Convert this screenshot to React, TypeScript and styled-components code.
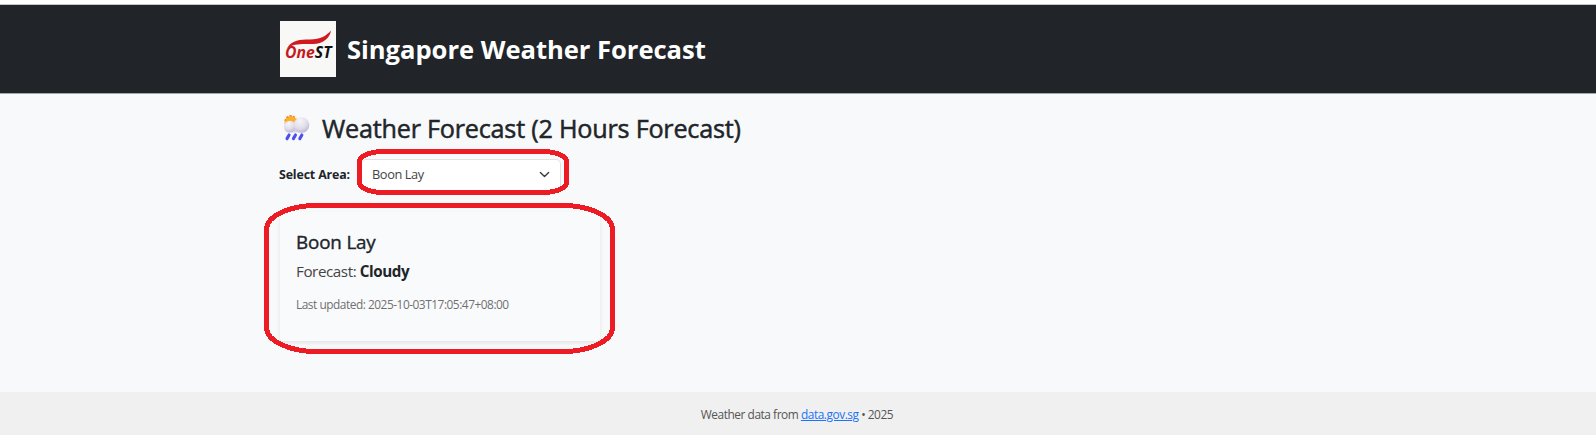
import React from "react";
import styled, { createGlobalStyle } from "styled-components";

const GlobalStyle = createGlobalStyle`
  * { box-sizing: border-box; }
  body {
    margin: 0;
    background: #f8f9fb;
    color: #212529;
    font-family: "Open Sans", "Noto Sans", sans-serif;
  }
`;

const Page = styled.div`
  position: relative;
  display: flex;
  flex-direction: column;
  height: 435px;
  overflow: hidden;
`;

const TopStrip = styled.div`
  height: 5px;
  flex: none;
  background: #fff;
  border-bottom: 1px solid #c4c6c8;
`;

const Header = styled.header`
  height: 89px;
  flex: none;
  background: #212529;
  border-bottom: 1px solid #a5a7aa;
`;

const Container = styled.div`
  width: 1036px;
  margin: 0 auto;
`;

const Brand = styled(Container)`
  display: flex;
  align-items: center;
  gap: 11px;
  padding-top: 16px;
`;

const Logo = styled.svg`
  display: block;
  width: 56px;
  height: 56px;
`;

const SiteTitle = styled.h1`
  margin: 2px 0 0;
  color: #fff;
  font-size: 25.6px;
  line-height: 36px;
  font-weight: 700;
  letter-spacing: -0.04px;
  white-space: nowrap;
`;

const Main = styled.main`
  flex: 1;
`;

const Heading = styled.h2`
  display: flex;
  align-items: center;
  gap: 11px;
  margin: 16px 0 0;
  height: 36px;
  font-size: 25.2px;
  line-height: 36px;
  font-weight: 400;
  letter-spacing: -0.22px;
  -webkit-text-stroke: 0.5px currentColor;
  white-space: nowrap;
`;

const WeatherIcon = styled.svg`
  width: 31px;
  height: 30px;
`;

const Field = styled.div`
  display: flex;
  align-items: center;
  gap: 12px;
  margin-top: 13px;
  height: 32px;
`;

const Label = styled.label`
  width: 70px;
  margin: -1px 0 0 -1px;
  padding-right: 1px;
  font-size: 12.4px;
  font-weight: 700;
  letter-spacing: -0.15px;
  white-space: nowrap;
`;

const Select = styled.div`
  display: flex;
  align-items: center;
  justify-content: space-between;
  width: 200px;
  height: 32px;
  padding: 0 10px 2px;
  background: #fff;
  border: 1px solid #dee2e6;
  border-radius: 5px;
  color: #444;
  font-size: 12.8px;
  letter-spacing: -0.4px;
`;

const Card = styled.section`
  width: 320px;
  height: 129px;
  margin-top: 21px;
  padding: 17px 16px;
  border-radius: 4px;
  background: #f9fafc;
  box-shadow: 0 2px 4px rgba(0, 0, 0, 0.09);
  white-space: nowrap;
`;

const CardTitle = styled.h3`
  margin: 0;
  font-size: 18.8px;
  line-height: 26px;
  font-weight: 400;
  letter-spacing: -0.15px;
  -webkit-text-stroke: 0.4px currentColor;
`;

const Forecast = styled.p`
  margin: 4px 0 0;
  color: #444;
  font-size: 15.2px;
  line-height: 24px;
  letter-spacing: -0.43px;

  strong {
    color: #212529;
    font-weight: 700;
  }
`;

const Updated = styled.p`
  margin: 11px 0 0;
  color: #707070;
  font-size: 11.9px;
  line-height: 20px;
  letter-spacing: -0.48px;
`;

const Footer = styled.footer`
  height: 43px;
  flex: none;
  padding-right: 2px;
  background: #f0f0f0;
  color: #555;
  font-size: 11.9px;
  line-height: 45px;
  letter-spacing: -0.46px;
  text-align: center;

  a { color: #1a73f8; }
`;

const Marker = styled.svg`
  position: absolute;
  inset: 0;
  width: 1596px;
  height: 435px;
  pointer-events: none;
`;

function OneSTLogo() {
  return (
    <Logo viewBox="0 0 56 56">
      <rect width="56" height="56" fill="#f8f8f6" />
      <path d="M7 27.5C10 21 18 18 28 18.5C40 19 46 15 51 9.5C50 17 43 23 33 23C22 23 14 22 7 27.5Z" fill="#cf1a20" />
      <text x="5" y="37.2" fontFamily="Open Sans" fontStyle="italic" fontWeight="700" fontSize="16.5" textLength="46.5" lengthAdjust="spacingAndGlyphs">
        <tspan fill="#c81820">One</tspan><tspan fill="#101010">ST</tspan>
      </text>
    </Logo>
  );
}

function RainCloud() {
  return (
    <WeatherIcon viewBox="0 0 31 30">
      <defs>
        <radialGradient id="cloud" cx="0.4" cy="0.25" r="0.8">
          <stop offset="0" stopColor="#f7f5f9" />
          <stop offset="0.6" stopColor="#dfdce8" />
          <stop offset="1" stopColor="#b9b0d2" />
        </radialGradient>
      </defs>
      <circle cx="10.8" cy="8.5" r="5.6" fill="#fbb02d" />
      <circle cx="10.8" cy="8.5" r="5.8" fill="none" stroke="#f58a1f" strokeWidth="1.4" strokeDasharray="2.4 1.2" />
      <rect x="5" y="12" width="22" height="7.5" rx="3.7" fill="#d8d4e4" />
      <circle cx="9.8" cy="13.6" r="5.9" fill="url(#cloud)" />
      <circle cx="21.5" cy="12" r="7.8" fill="url(#cloud)" />
      <path d="M9.1 22L7 25.6M15.5 22L13.4 25.6M21.9 22L19.8 25.6" stroke="#4a50ee" strokeWidth="3.1" strokeLinecap="round" />
    </WeatherIcon>
  );
}

export default function App() {
  return (
    <Page>
      <GlobalStyle />
      <TopStrip />
      <Header>
        <Brand>
          <OneSTLogo />
          <SiteTitle>Singapore Weather Forecast</SiteTitle>
        </Brand>
      </Header>
      <Main>
        <Container>
          <Heading>
            <RainCloud />
            <span>Weather Forecast (2 Hours Forecast)</span>
          </Heading>
          <Field>
            <Label>Select Area:</Label>
            <Select>
              <span>Boon Lay</span>
              <svg width="11" height="11" viewBox="0 0 16 16" fill="none" stroke="#343a40" strokeWidth="2" strokeLinecap="round" strokeLinejoin="round">
                <path d="m2 5 6 6 6-6" />
              </svg>
            </Select>
          </Field>
          <Card>
            <CardTitle>Boon Lay</CardTitle>
            <Forecast>Forecast: <strong>Cloudy</strong></Forecast>
            <Updated>Last updated: 2025-10-03T17:05:47+08:00</Updated>
          </Card>
        </Container>
      </Main>
      <Footer>
        Weather data from <a href="#">data.gov.sg</a> • 2025
      </Footer>
      <Marker viewBox="0 0 1596 435" fill="none" stroke="#ed1c24" strokeWidth="5" shapeRendering="crispEdges">
        <rect x="359.5" y="151.5" width="207" height="41" rx="24" ry="10" />
        <rect x="266.5" y="205.5" width="346" height="146" rx="50" ry="24" />
      </Marker>
    </Page>
  );
}
